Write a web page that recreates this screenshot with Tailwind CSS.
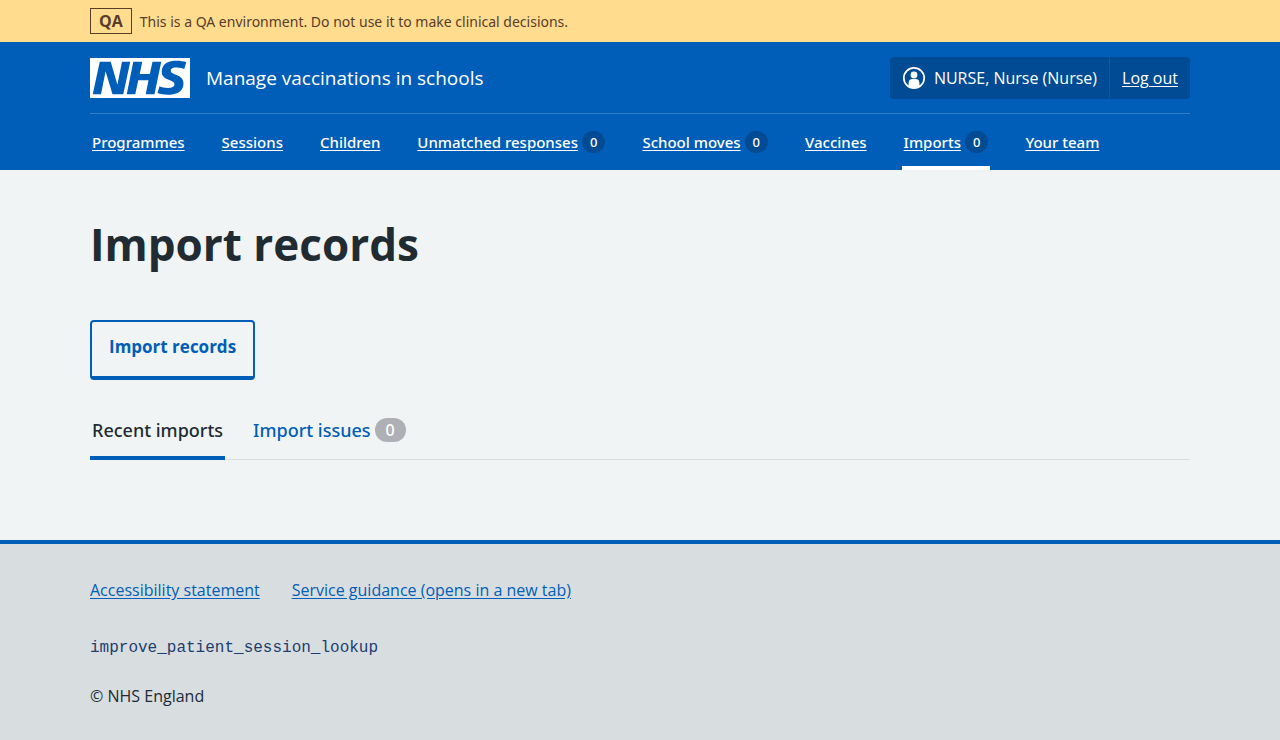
<!DOCTYPE html>
<html lang="en">
<head>
<meta charset="utf-8">
<meta name="viewport" content="width=device-width, initial-scale=1">
<title>Import records – Manage vaccinations in schools</title>
<script src="https://cdn.jsdelivr.net/npm/@tailwindcss/browser@4"></script>
</head>
<body class="flex min-h-screen flex-col bg-[#d8dde0] font-['Open_Sans','Noto_Sans',sans-serif] text-[#212b32]">

<div class="bg-[#ffdc8e] px-8 py-2 text-[#593d2b]">
  <div class="mx-auto flex max-w-[1100px] items-center gap-2 leading-6">
    <strong class="border border-[#593d2b] px-2 text-[16px]">QA</strong>
    <span class="pt-0.5 font-['Noto_Sans',sans-serif] text-[14px]">This is a QA environment. Do not use it to make clinical decisions.</span>
  </div>
</div>

<header class="bg-[#005eb8] px-8 text-white">
  <div class="mx-auto max-w-[1100px]">
    <div class="flex flex-wrap items-center justify-between gap-y-3 border-b border-white/20 pt-[15px] pb-[14px]">
      <a href="#" class="flex items-center gap-4">
        <svg class="h-10 w-[100px]" viewBox="0 0 40 16" role="img" aria-label="NHS">
          <path fill="#fff" d="M0 0h40v16H0z"/>
          <path fill="#005eb8" d="M3.9 1.5h4.4l2.6 9h.1l1.8-9h3.3l-2.8 13H9l-2.7-9h-.1l-1.8 9H1.1M17.3 1.5h3.6l-1 4.9h4L25 1.5h3.5l-2.7 13h-3.5l1.1-5.6h-4.1l-1.2 5.6h-3.4M37.7 4.4c-.7-.3-1.6-.6-2.9-.6-1.4 0-2.5.2-2.5 1.3 0 1.8 5.1 1.2 5.1 5.1 0 3.6-3.3 4.5-6.4 4.5-1.3 0-2.9-.3-4-.7l.8-2.7c.7.4 2.1.7 3.2.7s2.8-.2 2.8-1.5c0-2.1-5.1-1.3-5.1-5 0-3.4 2.9-4.4 5.8-4.4 1.6 0 3.1.2 4 .6"/>
        </svg>
        <span class="text-[19px] leading-7">Manage vaccinations in schools</span>
      </a>
      <div class="flex rounded bg-[#004b93] text-[16px] leading-[42px]">
        <div class="my-px flex items-center gap-2 border-r border-[#005eb8] px-3 leading-10">
          <svg class="size-6" viewBox="0 0 24 24" aria-hidden="true">
            <circle cx="12" cy="12" r="10.2" fill="none" stroke="#fff" stroke-width="1.7"/>
            <circle cx="12" cy="8.900" r="3.400" fill="#fff"/>
            <path fill="#fff" d="M6.600 20.500V17a4 4 0 0 1 4-4h2.800a4 4 0 0 1 4 4v3.500c-3 2.200-7.800 2.200-10.800 0z"/>
          </svg>
          <span>NURSE, Nurse (Nurse)</span>
        </div>
        <a href="#" class="px-3 underline underline-offset-2">Log out</a>
      </div>
    </div>
    <nav aria-label="Primary">
      <ul class="flex flex-wrap gap-x-[33px] font-['Noto_Sans',sans-serif] text-[15px] leading-[48px] font-medium">
        <li class="border-b-4 border-transparent px-0.5 pt-1"><a href="#" class="underline underline-offset-2">Programmes</a></li>
        <li class="border-b-4 border-transparent px-0.5 pt-1"><a href="#" class="underline underline-offset-2">Sessions</a></li>
        <li class="border-b-4 border-transparent px-0.5 pt-1"><a href="#" class="underline underline-offset-2">Children</a></li>
        <li class="border-b-4 border-transparent px-0.5 pt-1"><a href="#" class="flex items-center gap-1"><span class="underline underline-offset-2">Unmatched responses</span><span class="rounded-full bg-[#004b93] px-2 text-[13px] leading-[22px]">0</span></a></li>
        <li class="border-b-4 border-transparent px-0.5 pt-1"><a href="#" class="flex items-center gap-1"><span class="underline underline-offset-2">School moves</span><span class="rounded-full bg-[#004b93] px-2 text-[13px] leading-[22px]">0</span></a></li>
        <li class="border-b-4 border-transparent px-0.5 pt-1"><a href="#" class="underline underline-offset-2">Vaccines</a></li>
        <li class="border-b-4 border-white px-0.5 pt-1"><a href="#" aria-current="page" class="flex items-center gap-1"><span class="underline underline-offset-2">Imports</span><span class="rounded-full bg-[#004b93] px-2 text-[13px] leading-[22px]">0</span></a></li>
        <li class="border-b-4 border-transparent px-0.5 pt-1"><a href="#" class="underline underline-offset-2">Your team</a></li>
      </ul>
    </nav>
  </div>
</header>

<main class="bg-[#f0f4f5] px-8 pt-[46px] pb-20">
  <div class="mx-auto max-w-[1100px]">
    <h1 class="text-[44px] leading-[56px] font-bold">Import records</h1>
    <button type="button" class="mt-12 block rounded border-2 border-b-4 border-[#005eb8] px-[17px] pt-3 pb-4 text-[17px] leading-[26px] font-bold text-[#005eb8]">Import records</button>
    <nav aria-label="Imports" class="mt-7 shadow-[inset_0_-1px_#d8dde0]">
      <ul class="flex gap-[26px] font-['Noto_Sans',sans-serif] text-[18px] leading-[44px] font-medium">
        <li class="border-b-4 border-[#005eb8] px-0.5 pb-1"><a href="#" aria-current="page">Recent imports</a></li>
        <li class="px-0.5"><a href="#" class="flex items-center gap-1 text-[#005eb8]">Import issues<span class="rounded-full bg-[#aeb0b5] px-[11px] text-[16px] leading-6 text-white">0</span></a></li>
      </ul>
    </nav>
  </div>
</main>

<footer class="border-t-4 border-[#005eb8] px-8 pt-8 pb-8 text-[16px] leading-7">
  <div class="mx-auto max-w-[1100px]">
    <ul class="flex flex-wrap gap-x-8 text-[#005eb8]">
      <li><a href="#" class="underline underline-offset-2">Accessibility statement</a></li>
      <li><a href="#" class="underline underline-offset-2">Service guidance (opens in a new tab)</a></li>
    </ul>
    <p class="mt-[30px] font-['Liberation_Mono',monospace] text-[#1d3e6e]">improve_patient_session_lookup</p>
    <p class="mt-5">© NHS England</p>
  </div>
</footer>

</body>
</html>
